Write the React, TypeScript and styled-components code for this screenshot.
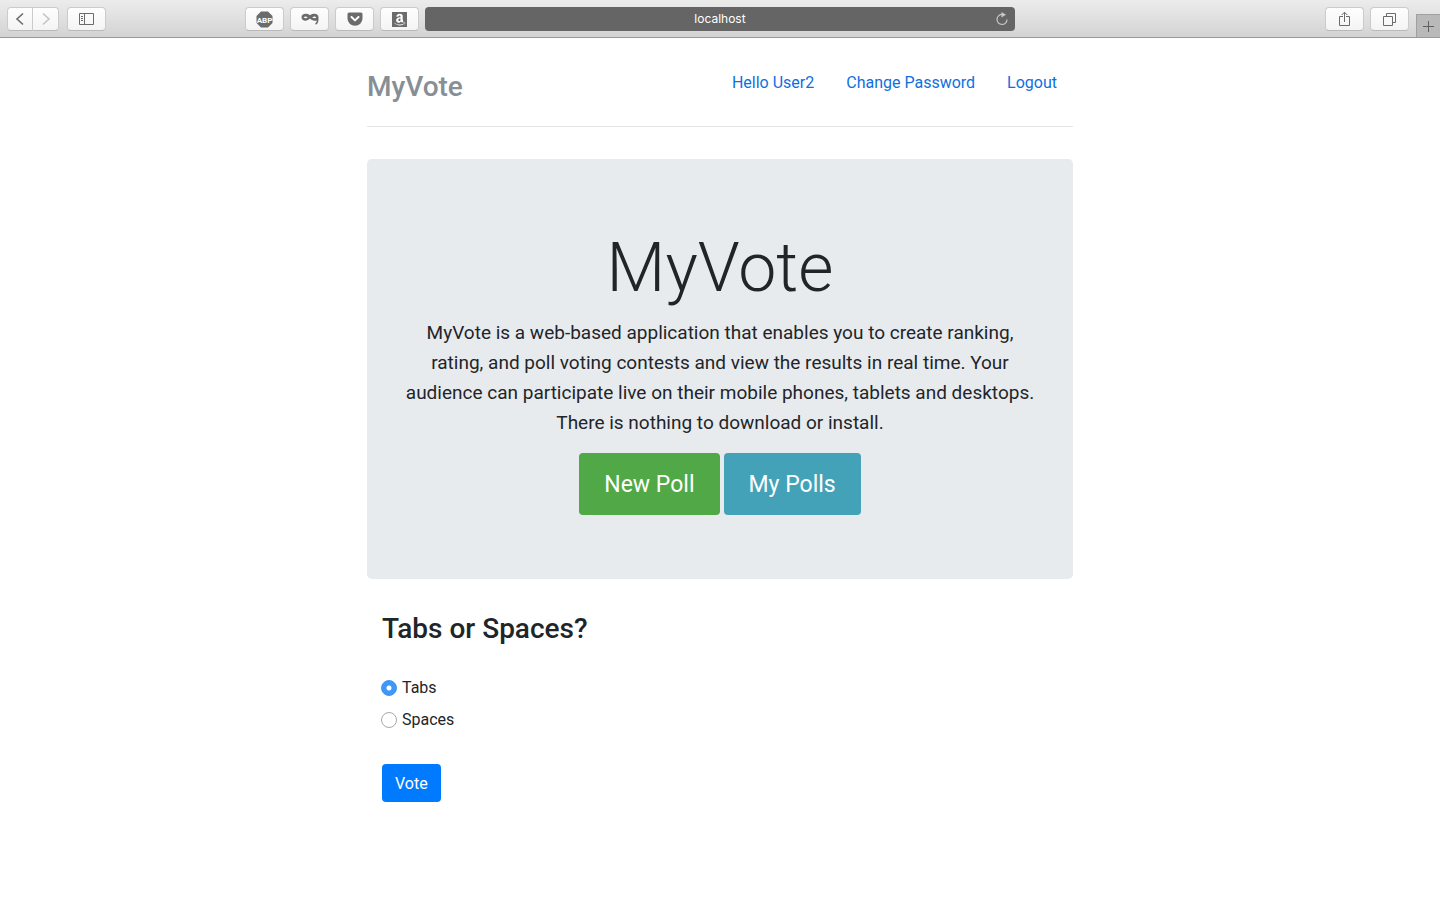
import React, { useState } from "react";
import styled, { createGlobalStyle, css } from "styled-components";
import { FaAmazon } from "react-icons/fa";

const GlobalStyle = createGlobalStyle`
  * { box-sizing: border-box; }
  body {
    margin: 0;
    background: #fff;
    color: #212529;
    font-family: Roboto, "Liberation Sans", sans-serif;
    font-size: 16px;
    line-height: 24px;
  }
  button, input { font-family: inherit; }
`;

const Toolbar = styled.div`
  display: grid;
  grid-template-columns: minmax(0, 1fr) minmax(0, 590px) minmax(0, 1fr);
  height: 38px;
  padding-top: 7px;
  background: linear-gradient(#ececec, #d3d3d3);
  border-bottom: 1px solid #999;
`;

const ToolbarSide = styled.div`
  display: flex;
  justify-content: space-between;
  padding: 0 6px 0 7px;
`;

const ToolbarEnd = styled.div`
  display: flex;
  justify-content: flex-end;
  gap: 7px;
`;

const ToolGroup = styled.div<{ $gap: number }>`
  display: flex;
  gap: ${(p) => p.$gap}px;
`;

const ToolButton = styled.button<{ $join?: "left" | "right" }>`
  display: flex;
  align-items: center;
  justify-content: center;
  width: 39px;
  height: 24px;
  padding: 0;
  color: #6b6b6b;
  background: linear-gradient(#fefefe, #f4f4f4);
  border: 1px solid #cbcbcb;
  border-bottom-color: #b9b9b9;
  border-radius: 4px;
  ${(p) =>
    p.$join === "left" &&
    css`
      width: 26px;
      border-radius: 4px 0 0 4px;
    `}
  ${(p) =>
    p.$join === "right" &&
    css`
      width: 26px;
      border-left: 0;
      border-radius: 0 4px 4px 0;
    `}
`;

const AddressBar = styled.div`
  display: grid;
  grid-template-columns: 20px 1fr 20px;
  align-items: center;
  height: 24px;
  background: #656565;
  border-radius: 4px;
`;

const Address = styled.input`
  grid-column: 2;
  width: 100%;
  padding: 0;
  border: 0;
  background: none;
  color: #fff;
  font-family: Inter, "Liberation Sans", sans-serif;
  font-size: 12px;
  line-height: 16px;
  text-align: center;
`;

const ReloadButton = styled.button`
  display: flex;
  padding: 0;
  border: 0;
  background: none;
  color: #c8c8c8;
`;

const NewTabButton = styled.button`
  display: flex;
  align-items: center;
  justify-content: center;
  align-self: flex-end;
  width: 24px;
  height: 23px;
  padding: 0;
  color: #606060;
  background: #b9b9b9;
  border: solid #a0a0a0;
  border-width: 1px 0 0 1px;
`;

const Container = styled.div`
  max-width: 736px;
  margin: 0 auto;
  padding: 24px 15px;
`;

const Header = styled.header`
  display: flex;
  justify-content: space-between;
  align-items: flex-start;
  margin-bottom: 32px;
  padding-bottom: 14px;
  border-bottom: 1px solid #e5e5e5;
`;

const Brand = styled.h3`
  margin: 0;
  color: #868e96;
  font-size: 28px;
  font-weight: 500;
  line-height: 50px;
`;

const Nav = styled.nav`
  display: flex;
`;

const NavLink = styled.a`
  padding: 9px 16px 7px;
  color: #0f6fe0;
  text-decoration: none;
`;

const Jumbotron = styled.section`
  margin-bottom: 32px;
  padding: 64px 32px;
  background: #e8ebee;
  border-radius: 5px;
  text-align: center;
`;

const Title = styled.h1`
  margin: 0 0 4px;
  font-size: 68px;
  font-weight: 300;
  line-height: 91px;
`;

const Lead = styled.p`
  margin: 0 0 15px;
  font-size: 19px;
  font-weight: 400;
  line-height: 30px;
`;

const Actions = styled.div`
  display: flex;
  justify-content: center;
  gap: 4px;
`;

const LargeButton = styled.button<{ $color: string }>`
  height: 62px;
  padding: 2px 25px 0;
  border: 0;
  border-radius: 4px;
  background: ${(p) => p.$color};
  color: #fff;
  font-size: 23px;
  line-height: 30px;
`;

const Poll = styled.form`
  padding: 0 15px;
`;

const Question = styled.h3`
  margin: 0 0 29px;
  font-size: 28px;
  font-weight: 500;
  line-height: 36px;
`;

const Options = styled.div`
  display: grid;
  justify-items: start;
  gap: 8px;
  margin-bottom: 32px;
`;

const Option = styled.label`
  display: flex;
  align-items: center;
  gap: 5px;
`;

const Radio = styled.input`
  appearance: none;
  width: 16px;
  height: 16px;
  margin: 0 0 0 -1px;
  border: 1px solid #a9a9a9;
  border-radius: 50%;
  background: #fff;
  &:checked {
    border-color: #3b93f5;
    background: radial-gradient(circle, #fff 2px, #3f97f6 3px);
  }
`;

const VoteButton = styled.button`
  height: 38px;
  padding: 2px 13px 0;
  border: 0;
  border-radius: 4px;
  background: #007bff;
  color: #fff;
  font-size: 16px;
  line-height: 24px;
`;

const BackIcon = () => (
  <svg width="10" height="14" viewBox="0 0 10 14" fill="none" stroke="currentColor" strokeWidth="1.6">
    <path d="M8 1.5 2 7l6 5.5" />
  </svg>
);

const ForwardIcon = () => (
  <svg width="10" height="14" viewBox="0 0 10 14" fill="none" stroke="#c4c4c4" strokeWidth="1.6">
    <path d="M2 1.5 8 7l-6 5.5" />
  </svg>
);

const SidebarIcon = () => (
  <svg width="16" height="12" viewBox="0 0 16 12" fill="none" stroke="currentColor">
    <path d="M.5.5h14v11H.5zM5.5.5v11M2 3.5h2M2 5.5h2M2 7.5h2" />
  </svg>
);

const AdblockIcon = () => (
  <svg width="17" height="17" viewBox="0 0 17 17">
    <path d="M5 .5h7l4.5 4.5v7L12 16.5H5L.5 12V5z" fill="currentColor" />
    <text x="8.5" y="11.500" fill="#fff" fontFamily="Roboto, sans-serif" fontSize="8" fontWeight="700" textAnchor="middle">
      ABP
    </text>
  </svg>
);

const MaskIcon = () => (
  <svg width="18" height="12" viewBox="0 0 18 12">
    <path
      fill="currentColor"
      fillRule="evenodd"
      d="M9 2.300C7.500 1.200 6 .8 4.500.8 2.200.8.500 2 .500 4.200S2.200 7.800 4.300 7.800C6.300 7.800 7.800 6.800 9 5.600c1.300 1.300 2.800 2.200 4.600 2.200.8 0 1.400-.1 2-.4.100 1.500-.4 2.300-1.500 3.200l.9 1.200c2-1.300 2.600-3.200 2.500-6V4.200C17.500 2 15.800.8 13.500.8 12 .8 10.500 1.200 9 2.300zM2.600 4.500C3.700 3.200 5.600 3.200 6.700 4.500 5.600 5.600 3.700 5.600 2.600 4.500zM11.300 4.500c1.100-1.300 3-1.300 4.100 0-1.100 1.100-3 1.100-4.100 0z"
    />
  </svg>
);

const PocketIcon = () => (
  <svg width="16" height="14" viewBox="0 0 16 14">
    <path d="M2 .5h12A1.500 1.500 0 0 1 15.500 2v4.500a7.500 7.300 0 0 1-15 0V2A1.500 1.500 0 0 1 2 .5z" fill="currentColor" />
    <path d="m4.500 5 3.500 3.400L11.500 5" fill="none" stroke="#fff" strokeWidth="2" strokeLinecap="round" strokeLinejoin="round" />
  </svg>
);

const AmazonIcon = () => (
  <svg width="15" height="15" viewBox="0 0 15 15">
    <path d="M0 0h15v15H0z" fill="currentColor" />
    <FaAmazon x="1" y="1" width="13" height="13" color="#fff" />
  </svg>
);

const ReloadIcon = () => (
  <svg width="14" height="14" viewBox="0 0 14 14" fill="none" stroke="currentColor" strokeWidth="1.200">
    <path d="M7.500 2.500A5 5 0 1 0 12 7.500" />
    <path d="M6.500 0 11 2.800 6.500 5.500z" fill="currentColor" stroke="none" />
  </svg>
);

const ShareIcon = () => (
  <svg width="12" height="16" viewBox="0 0 12 16" fill="none" stroke="currentColor">
    <path d="M4 5.500H.5v9h10v-9H7M5.500 11V1.500M2.700 4 5.500 1.200 8.300 4" />
  </svg>
);

const TabsIcon = () => (
  <svg width="13" height="13" viewBox="0 0 13 13" fill="none" stroke="currentColor">
    <path d="M.5 3.500h9v9h-9zM3.500 3V.5h9v9H10" />
  </svg>
);

const PlusIcon = () => (
  <svg width="11" height="11" viewBox="0 0 11 11" stroke="currentColor">
    <path d="M5.500 0v11M0 5.500h11" />
  </svg>
);

const choices = ["Tabs", "Spaces"];

export default function App() {
  const [choice, setChoice] = useState("Tabs");
  return (
    <>
      <GlobalStyle />
      <Toolbar>
        <ToolbarSide>
          <ToolGroup $gap={8}>
            <ToolGroup $gap={0}>
              <ToolButton $join="left" aria-label="Back"><BackIcon /></ToolButton>
              <ToolButton $join="right" aria-label="Forward"><ForwardIcon /></ToolButton>
            </ToolGroup>
            <ToolButton aria-label="Sidebar"><SidebarIcon /></ToolButton>
          </ToolGroup>
          <ToolGroup $gap={6}>
            <ToolButton aria-label="Ad blocker"><AdblockIcon /></ToolButton>
            <ToolButton aria-label="Privacy mask"><MaskIcon /></ToolButton>
            <ToolButton aria-label="Save to Pocket"><PocketIcon /></ToolButton>
            <ToolButton aria-label="Amazon"><AmazonIcon /></ToolButton>
          </ToolGroup>
        </ToolbarSide>
        <AddressBar>
          <Address aria-label="Address" defaultValue="localhost" />
          <ReloadButton aria-label="Reload"><ReloadIcon /></ReloadButton>
        </AddressBar>
        <ToolbarEnd>
          <ToolGroup $gap={6}>
            <ToolButton aria-label="Share"><ShareIcon /></ToolButton>
            <ToolButton aria-label="Show tabs"><TabsIcon /></ToolButton>
          </ToolGroup>
          <NewTabButton aria-label="New tab"><PlusIcon /></NewTabButton>
        </ToolbarEnd>
      </Toolbar>
      <Container>
        <Header>
          <Brand>MyVote</Brand>
          <Nav>
            <NavLink href="#profile">Hello User2</NavLink>
            <NavLink href="#password">Change Password</NavLink>
            <NavLink href="#logout">Logout</NavLink>
          </Nav>
        </Header>
        <main>
          <Jumbotron>
            <Title>MyVote</Title>
            <Lead>
              MyVote is a web-based application that enables you to create ranking, rating, and poll
              voting contests and view the results in real time. Your audience can participate live
              on their mobile phones, tablets and desktops. There is nothing to download or install.
            </Lead>
            <Actions>
              <LargeButton $color="#50a846">New Poll</LargeButton>
              <LargeButton $color="#43a2b8">My Polls</LargeButton>
            </Actions>
          </Jumbotron>
          <Poll onSubmit={(e) => e.preventDefault()}>
            <Question>Tabs or Spaces?</Question>
            <Options>
              {choices.map((name) => (
                <Option key={name}>
                  <Radio
                    type="radio"
                    name="choice"
                    value={name}
                    checked={choice === name}
                    onChange={() => setChoice(name)}
                  />
                  {name}
                </Option>
              ))}
            </Options>
            <VoteButton type="submit">Vote</VoteButton>
          </Poll>
        </main>
      </Container>
    </>
  );
}
